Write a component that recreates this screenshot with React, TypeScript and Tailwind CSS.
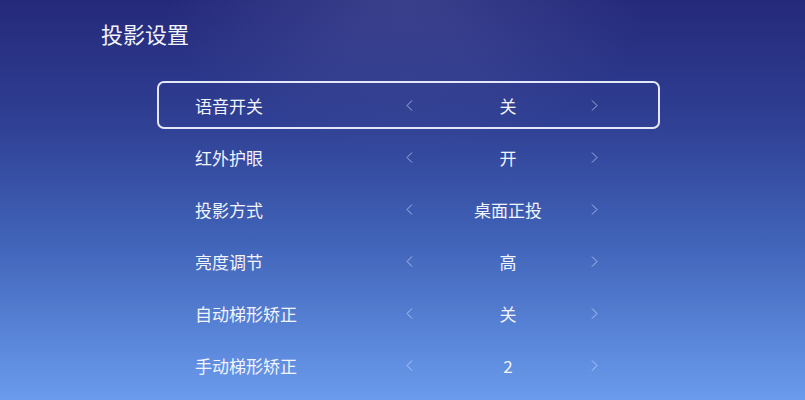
import React from 'react';

const rows = [
  { label: '语音开关', value: '关' },
  { label: '红外护眼', value: '开' },
  { label: '投影方式', value: '桌面正投' },
  { label: '亮度调节', value: '高' },
  { label: '自动梯形矫正', value: '关' },
  { label: '手动梯形矫正', value: '2' },
];

function Chevron({ dir }: { dir: 'left' | 'right' }) {
  return (
    <svg width="7" height="11" viewBox="0 0 7 11" className="shrink-0">
      <polyline
        points={dir === 'left' ? '6,0.5 1,5.5 6,10.5' : '1,0.5 6,5.5 1,10.5'}
        fill="none"
        stroke="rgba(225,232,255,0.65)"
        strokeWidth="1"
      />
    </svg>
  );
}

export default function App() {
  return (
    <div
      className="relative w-[805px] h-[400px] overflow-hidden bg-[linear-gradient(180deg,#25297a_0%,#2f3f93_30%,#4063b8_60%,#6a9bec_100%)] text-[#f2f4fc]"
      style={{ fontFamily: '"Noto Sans CJK SC", "Noto Sans", sans-serif' }}
    >
      <div className="absolute inset-0 bg-[radial-gradient(ellipse_240px_150px_at_405px_0px,rgba(110,115,180,0.3),rgba(110,115,180,0))]" />
      <div className="relative">
        <div className="pl-[101px] pt-[19px] text-[22px] leading-[28px]">投影设置</div>
        <div className="ml-[157px] mt-[32px] w-[503px] flex flex-col">
          {rows.map((r, i) => (
            <div
              key={r.label}
              className={
                'h-[48px] my-[2px] flex items-center rounded-[7px] border-2 ' +
                (i === 0 ? 'border-[#e3e7f7]' : 'border-transparent')
              }
            >
              <div className="pl-[36px] w-[247px] text-[17px] leading-none">{r.label}</div>
              <Chevron dir="left" />
              <div className="ml-[12px] w-[166px] text-center text-[17px] leading-none">{r.value}</div>
              <Chevron dir="right" />
            </div>
          ))}
        </div>
      </div>
    </div>
  );
}
